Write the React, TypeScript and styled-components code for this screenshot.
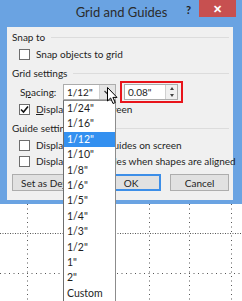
import styled, { createGlobalStyle } from 'styled-components'

const GlobalStyle = createGlobalStyle`
  html, body {
    margin: 0;
    padding: 0;
    background: #ffffff;
  }
  body {
    font-family: Lato, "Open Sans", sans-serif;
    font-size: 10px;
    color: #1e1e1e;
  }
`

const Screen = styled.div`
  position: relative;
  width: 242px;
  height: 301px;
  overflow: hidden;
  display: flex;
  flex-direction: column;
`

const Dialog = styled.div`
  background: #6aa3e2;
  padding: 0 9px 4px 7px;
  display: flex;
  flex-direction: column;
`

const TitleBar = styled.div`
  height: 27px;
  margin: 0 -9px 0 -7px;
  padding: 0 6px 0 7px;
  display: grid;
  grid-template-columns: 1fr auto 1fr;
  align-items: start;
`

const Title = styled.div`
  grid-column: 2;
  padding-top: 4px;
  font-size: 13px;
  color: #2b2b2b;
`

const Controls = styled.div`
  grid-column: 3;
  justify-self: end;
  display: flex;
  align-items: flex-start;
`

const Help = styled.div`
  margin: 3px 8px 0 0;
  font-size: 11px;
  font-weight: bold;
  color: #222;
`

const Close = styled.div`
  width: 37px;
  height: 17px;
  background: #c75050;
  color: #fff;
  font-size: 11px;
  font-weight: bold;
  display: flex;
  align-items: center;
  justify-content: center;
`

const Panel = styled.div`
  background: #f0f0f0;
  padding: 2px 4px 9px 5px;
  display: flex;
  flex-direction: column;
`

const SectionHeader = styled.div<{ $top?: number }>`
  height: 16px;
  margin-top: ${p => p.$top ?? 0}px;
  display: flex;
  align-items: center;
  gap: 6px;
  &::after {
    content: '';
    flex: 1;
    height: 1px;
    background: #dcdcdc;
  }
`

const CheckRow = styled.div<{ $h?: number; $top?: number }>`
  height: ${p => p.$h ?? 16}px;
  margin-top: ${p => p.$top ?? 0}px;
  padding-left: 7px;
  display: flex;
  align-items: center;
  gap: 6px;
  white-space: nowrap;
`

const Box = styled.div`
  width: 11px;
  height: 11px;
  box-sizing: border-box;
  border: 1px solid #6d6d6d;
  background: #fff;
  display: flex;
  align-items: center;
  justify-content: center;
  flex-shrink: 0;
`

const Key = styled.span`
  text-decoration: underline;
`

const SpacingRow = styled.div`
  height: 20px;
  margin-top: 1px;
  padding-left: 8px;
  display: flex;
  align-items: center;
`

const Label = styled.div`
  width: 43px;
`

const Combo = styled.div`
  width: 53px;
  height: 16px;
  box-sizing: border-box;
  border: 1px solid #acacac;
  background: #fff;
  display: flex;
  align-items: center;
`

const ComboText = styled.div`
  flex: 1;
  padding-left: 3px;
`

const DropButton = styled.div`
  width: 15px;
  align-self: stretch;
  background: #e5e5e5;
  border-left: 1px solid #d0d0d0;
  display: flex;
  align-items: center;
  justify-content: center;
`

const Highlight = styled.div`
  margin-left: 4px;
  width: 63px;
  height: 22px;
  box-sizing: border-box;
  border: 2px solid #e8141b;
  padding: 1px 3px 1px 2px;
  display: flex;
  align-items: center;
`

const Input = styled.div`
  flex: 1;
  height: 16px;
  box-sizing: border-box;
  border: 1px solid #acacac;
  background: #fff;
  display: flex;
  align-items: center;
`

const InputText = styled.div`
  flex: 1;
  padding-left: 3px;
`

const Spinner = styled.div`
  width: 11px;
  align-self: stretch;
  background: #f0f0f0;
  border-left: 1px solid #d0d0d0;
  display: flex;
  flex-direction: column;
  align-items: center;
  justify-content: space-around;
`

const Tri = styled.div<{ $up?: boolean }>`
  width: 0;
  height: 0;
  border-left: 2.5px solid transparent;
  border-right: 2.5px solid transparent;
  ${p => (p.$up ? 'border-bottom: 3px solid #444;' : 'border-top: 3px solid #444;')}
`

const ButtonRow = styled.div`
  margin-top: 5px;
  height: 17px;
  display: flex;
  gap: 9px;
`

const Button = styled.div<{ $w: number; $focus?: boolean }>`
  width: ${p => p.$w}px;
  box-sizing: border-box;
  border: 1px solid ${p => (p.$focus ? '#3c8ee8' : '#adadad')};
  box-shadow: ${p => (p.$focus ? 'inset 0 0 0 1px #3c8ee8' : 'none')};
  background: #e1e1e1;
  display: flex;
  align-items: center;
  justify-content: center;
  white-space: nowrap;
`

const Canvas = styled.div`
  flex: 1;
  background: #fff;
`

const List = styled.div`
  position: absolute;
  left: 63px;
  top: 100px;
  width: 53px;
  height: 220px;
  box-sizing: border-box;
  background: #fff;
  border: 1px solid #8c8c8c;
  border-left-color: #6e6e6e;
`

const Item = styled.div<{ $sel?: boolean }>`
  height: 15.4px;
  line-height: 15.4px;
  padding-left: 3px;
  font-size: 10.5px;
  background: ${p => (p.$sel ? '#3390f0' : 'transparent')};
  color: ${p => (p.$sel ? '#fff' : '#1e1e1e')};
`

const Cursor = styled.svg`
  position: absolute;
  left: 107px;
  top: 87px;
`

const sizes = ['1/24"', '1/16"', '1/12"', '1/10"', '1/8"', '1/6"', '1/5"', '1/4"', '1/3"', '1/2"', '1"', '2"', 'Custom']

const Check = () => (
  <svg width="9" height="9" viewBox="0 0 9 9">
    <path d="M1 4.5 L3.5 7 L8 1.5" fill="none" stroke="#111" strokeWidth="1.6" />
  </svg>
)

export default function App() {
  return (
    <Screen>
      <GlobalStyle />
      <Dialog>
        <TitleBar>
          <Title>Grid and Guides</Title>
          <Controls>
            <Help>?</Help>
            <Close>✕</Close>
          </Controls>
        </TitleBar>
        <Panel>
          <SectionHeader>Snap to</SectionHeader>
          <CheckRow $h={18}>
            <Box />
            <span>Snap objects to grid</span>
          </CheckRow>
          <SectionHeader $top={2}>Grid settings</SectionHeader>
          <SpacingRow>
            <Label>
              S<Key>p</Key>acing:
            </Label>
            <Combo>
              <ComboText>1/12"</ComboText>
              <DropButton>
                <svg width="7" height="5" viewBox="0 0 7 5">
                  <path d="M0.5 1 L3.5 4 L6.5 1" fill="none" stroke="#333" strokeWidth="1.2" />
                </svg>
              </DropButton>
            </Combo>
            <Highlight>
              <Input>
                <InputText>0.08"</InputText>
                <Spinner>
                  <Tri $up />
                  <Tri />
                </Spinner>
              </Input>
            </Highlight>
          </SpacingRow>
          <CheckRow $h={14}>
            <Box>
              <Check />
            </Box>
            <span>
              <Key>D</Key>isplay grid on screen
            </span>
          </CheckRow>
          <SectionHeader $top={4}>Guide settings</SectionHeader>
          <CheckRow $top={1}>
            <Box />
            <span>Display drawing guides on screen</span>
          </CheckRow>
          <CheckRow>
            <Box />
            <span>Display smart guides when shapes are aligned</span>
          </CheckRow>
          <ButtonRow>
            <Button $w={80}>
              Set as De<Key>f</Key>ault
            </Button>
            <Button $w={61} $focus>
              OK
            </Button>
            <Button $w={59}>Cancel</Button>
          </ButtonRow>
        </Panel>
      </Dialog>
      <Canvas>
        <svg width="242" height="97" viewBox="0 0 242 97">
          <g stroke="#555" strokeWidth="1" strokeDasharray="1 3.5">
            <line x1="27.5" y1="0" x2="27.5" y2="97" />
            <line x1="149.5" y1="0" x2="149.5" y2="97" />
            <line x1="189.5" y1="0" x2="189.5" y2="97" />
            <line x1="231.5" y1="0" x2="231.5" y2="97" />
          </g>
          <line x1="0" y1="29.5" x2="242" y2="29.5" stroke="#555" strokeWidth="1" strokeDasharray="1 1.5" />
          <line x1="0" y1="69.5" x2="242" y2="69.5" stroke="#555" strokeWidth="1" strokeDasharray="1 3.5" />
        </svg>
      </Canvas>
      <List>
        {sizes.map((s, i) => (
          <Item key={s} $sel={i === 2}>
            {s}
          </Item>
        ))}
      </List>
      <Cursor width="12" height="18" viewBox="0 0 12 18">
        <path d="M0.5 0.5 L0.5 14 L3.6 11 L6 16.5 L8.2 15.6 L5.9 10.4 L10 10.4 Z" fill="#fff" stroke="#000" strokeWidth="1" />
      </Cursor>
    </Screen>
  )
}
